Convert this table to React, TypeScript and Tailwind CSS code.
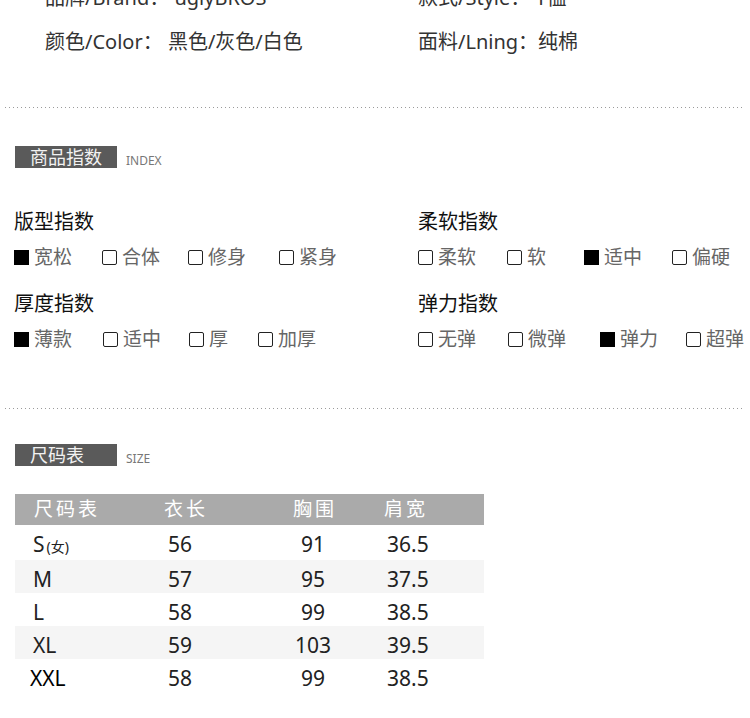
import React from "react";

type Opt = { label: string; on?: boolean; w: string };

const fitRows: { title: string; opts: Opt[] }[][] = [
  [
    {
      title: "版型指数",
      opts: [
        { label: "宽松", on: true, w: "w-[88px]" },
        { label: "合体", w: "w-[86px]" },
        { label: "修身", w: "w-[91px]" },
        { label: "紧身", w: "w-auto" },
      ],
    },
    {
      title: "柔软指数",
      opts: [
        { label: "柔软", w: "w-[89px]" },
        { label: "软", w: "w-[77px]" },
        { label: "适中", on: true, w: "w-[88px]" },
        { label: "偏硬", w: "w-auto" },
      ],
    },
  ],
  [
    {
      title: "厚度指数",
      opts: [
        { label: "薄款", on: true, w: "w-[89px]" },
        { label: "适中", w: "w-[86px]" },
        { label: "厚", w: "w-[69px]" },
        { label: "加厚", w: "w-auto" },
      ],
    },
    {
      title: "弹力指数",
      opts: [
        { label: "无弹", w: "w-[90px]" },
        { label: "微弹", w: "w-[92px]" },
        { label: "弹力", on: true, w: "w-[86px]" },
        { label: "超弹", w: "w-auto" },
      ],
    },
  ],
];

const sizes = [
  { s: "S", sub: "(女)", len: "56", chest: "91", sh: "36.5", h: "h-[35px]" },
  { s: "M", len: "57", chest: "95", sh: "37.5", h: "h-[33px]" },
  { s: "L", len: "58", chest: "99", sh: "38.5", h: "h-[33px]" },
  { s: "XL", len: "59", chest: "103", sh: "39.5", h: "h-[33px]" },
  { s: "XXL", len: "58", chest: "99", sh: "38.5", h: "h-[36px]" },
];

function Dotted() {
  return (
    <div className="mx-[5px] h-px bg-[repeating-linear-gradient(90deg,#9a9a9a_0_1px,transparent_1px_4px)]" />
  );
}

function Badge({ cn, en }: { cn: string; en: string }) {
  return (
    <div className="flex items-end pl-[15px]">
      <div className="flex h-[22px] w-[102px] items-center bg-[#5a5a5a] pl-[15px] text-[18px] leading-none text-[#f2f2f2]">
        {cn}
      </div>
      <span className="mb-[1px] ml-[9px] text-[12px] leading-none text-[#777]">{en}</span>
    </div>
  );
}

function Box({ on }: { on?: boolean }) {
  return on ? (
    <span className="block h-[15px] w-[15px] shrink-0 bg-black" />
  ) : (
    <span className="block h-[15px] w-[15px] shrink-0 rounded-[2px] border-[1.5px] border-[#222]" />
  );
}

export default function App() {
  return (
    <div className="h-[718px] w-[750px] overflow-hidden bg-white font-['Noto_Sans','Noto_Sans_CJK_SC',sans-serif]">
      {/* product info */}
      <div className="mt-[-24px] grid grid-cols-[418px_1fr] text-[20px] text-[#333]">
        <div className="flex h-[44px] items-center pl-[45px]">品牌/Brand：&nbsp;uglyBROS</div>
        <div className="flex h-[44px] items-center">款式/Style：&nbsp;T恤</div>
        <div className="flex h-[44px] items-center pl-[45px]">颜色/Color：&nbsp;黑色/灰色/白色</div>
        <div className="flex h-[44px] items-center">面料/Lning：纯棉</div>
      </div>

      <div className="mt-[43px]">
        <Dotted />
      </div>

      <div className="mt-[38px]">
        <Badge cn="商品指数" en="INDEX" />
      </div>

      <div className="mt-[40px]">
        {fitRows.map((row, ri) => (
          <div key={ri} className={`grid grid-cols-[418px_1fr] ${ri ? "mt-[18px]" : ""}`}>
            {row.map((g, gi) => (
              <div key={g.title} className={gi ? "" : "pl-[14px]"}>
                <div className="flex h-[28px] items-center text-[20px] text-[#111]">{g.title}</div>
                <div className="mt-[6px] flex h-[30px] items-center">
                  {g.opts.map((o) => (
                    <div key={o.label} className={`flex items-center gap-[5px] ${o.w}`}>
                      <Box on={o.on} />
                      <span className="text-[19px] leading-none text-[#666]">{o.label}</span>
                    </div>
                  ))}
                </div>
              </div>
            ))}
          </div>
        ))}
      </div>

      <div className="mt-[54px]">
        <Dotted />
      </div>

      <div className="mt-[35px]">
        <Badge cn="尺码表" en="SIZE" />
      </div>

      {/* size table */}
      <div className="ml-[15px] mt-[28px] w-[469px]">
        <div className="grid h-[31px] grid-cols-[149px_122px_91px_1fr] items-center bg-[#aaaaaa] text-[19px] tracking-[3px] text-white">
          <span className="pl-[19px]">尺码表</span>
          <span>衣长</span>
          <span className="pl-[7px]">胸围</span>
          <span className="pl-[7px]">肩宽</span>
        </div>
        {sizes.map((r, i) => (
          <div
            key={r.s}
            className={`grid grid-cols-[149px_122px_91px_1fr] items-center pt-[4px] text-[21px] text-[#222] ${r.h} ${
              i % 2 === 1 ? "bg-[#f5f5f5]" : ""
            }`}
          >
            <span className={r.s === "XXL" ? "pl-[15px] text-black" : "pl-[18px]"}>
              {r.s}
              {r.sub && <span className="ml-[2px] text-[14px]">{r.sub}</span>}
            </span>
            <span className="pl-[4px]">{r.len}</span>
            <span className="block w-[54px] text-center">{r.chest}</span>
            <span className="pl-[10px]">{r.sh}</span>
          </div>
        ))}
      </div>
    </div>
  );
}
